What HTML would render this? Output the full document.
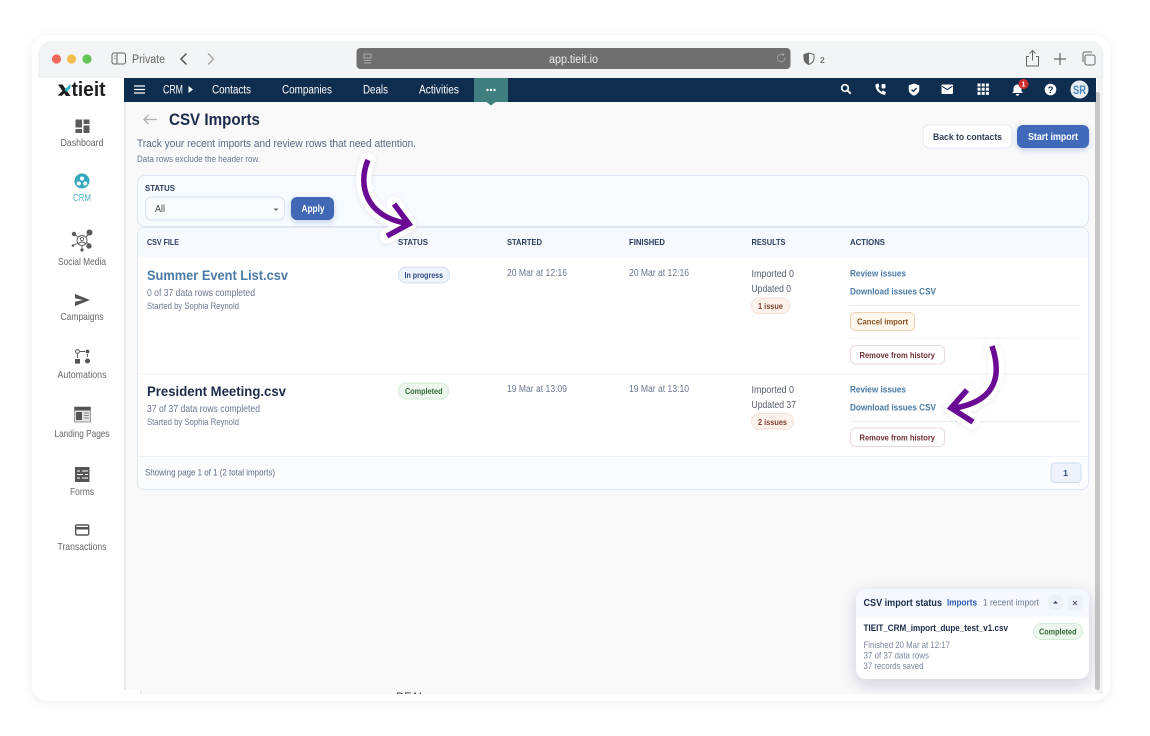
<!DOCTYPE html>
<html><head><meta charset="utf-8"><title>CSV Imports</title>
<style>
html,body{margin:0;padding:0;background:#fff;width:1150px;height:736px;overflow:hidden}
svg{display:block}
text{font-family:"Liberation Sans",sans-serif}
.b{font-weight:700}
</style></head><body>
<svg xmlns="http://www.w3.org/2000/svg" width="1150" height="736" viewBox="0 0 1150 736">
<defs>
<filter id="outer" x="-5%" y="-5%" width="110%" height="110%"><feDropShadow dx="0" dy="2" stdDeviation="5" flood-color="#000" flood-opacity=".07"/></filter>
<filter id="pop" x="-20%" y="-30%" width="140%" height="170%"><feDropShadow dx="0" dy="5" stdDeviation="8" flood-color="#1b2b4b" flood-opacity=".2"/></filter>
<filter id="btn" x="-30%" y="-30%" width="160%" height="190%"><feDropShadow dx="0" dy="2" stdDeviation="3" flood-color="#3f67b5" flood-opacity=".3"/></filter>
<filter id="halo" x="-30%" y="-30%" width="160%" height="160%"><feDropShadow dx="0" dy="1" stdDeviation="2.500" flood-color="#000" flood-opacity=".08"/></filter>
<clipPath id="win"><rect x="39" y="42" width="1064" height="652"/></clipPath>
</defs>

<!-- outer frame -->
<rect x="32" y="35" width="1078" height="666" rx="16" fill="#fff" filter="url(#outer)"/>
<path d="M39 78V54a12 12 0 0 1 12-12H1091a12 12 0 0 1 12 12V78Z" fill="#f3f4f6" stroke="#e9eaec" stroke-width=".7"/>

<!-- traffic lights -->
<circle cx="56.500" cy="59" r="4.600" fill="#ee6a5f"/><circle cx="71.500" cy="59" r="4.600" fill="#f5bd4f"/><circle cx="87" cy="59" r="4.600" fill="#61c454"/>
<rect x="112" y="53" width="13.500" height="11" rx="2" fill="none" stroke="#666" stroke-width="1"/><path d="M117 53v11" stroke="#666"/><path d="M114 56h1.500M114 58.500h1.500" stroke="#666" stroke-width=".8"/>
<text x="132" y="63" font-size="11.500" fill="#666" textLength="33" lengthAdjust="spacingAndGlyphs">Private</text>
<path d="M186.500 53.500l-5.500 5.500 5.500 5.500" fill="none" stroke="#555" stroke-width="1.500"/>
<path d="M208 53.500l5.500 5.500-5.500 5.500" fill="none" stroke="#aaa" stroke-width="1.500"/>
<rect x="356.500" y="48" width="434" height="21" rx="4" fill="#6f6f6f"/>
<path d="M364 54h7v4h-7zM364 60.500h7M364 63h7" fill="none" stroke="#a9a9a9" stroke-width="1"/>
<text x="549" y="63" font-size="11.500" fill="#ececec" textLength="49" lengthAdjust="spacingAndGlyphs">app.tieit.io</text>
<path d="M785 58a3.800 3.800 0 1 1-2-3.300M782.500 53l1.500 1.700-2 1" fill="none" stroke="#a5a5a5" stroke-width=".9"/>
<path d="M809 53l5 1.500v4c0 3-2.500 5-5 6-2.500-1-5-3-5-6v-4Z" fill="none" stroke="#666" stroke-width="1"/><path d="M809 53v11.500c-2.500-1-5-3-5-6v-4Z" fill="#666"/>
<text x="820" y="63" font-size="8.500" class="b" fill="#777">2</text>
<path d="M1029 57h-2.500v9.500h12V57H1036M1032.500 61V51.500M1029.500 54l3-3 3 3" fill="none" stroke="#666" stroke-width="1" transform="translate(0 -.5)"/>
<path d="M1060 53v12M1054 59h12" stroke="#666" stroke-width="1.200"/>
<rect x="1085" y="55" width="10" height="10" rx="2" fill="none" stroke="#666"/><path d="M1083 62v-8a2 2 0 0 1 2-2h7" fill="none" stroke="#666"/>

<g clip-path="url(#win)">
<!-- sidebar & content -->
<rect x="32" y="78" width="92" height="612" fill="#fff"/>
<rect x="124" y="102" width="973" height="592" fill="#f9f9f9"/>
<rect x="124" y="102" width="2" height="588" fill="#ececec"/>
<rect x="32" y="690" width="108" height="10" fill="#fff"/>
<rect x="140" y="690" width="1.500" height="4" fill="#e8e8e8"/>
<rect x="1097" y="78" width="6" height="616" fill="#f4f4f4"/>
<rect x="1095" y="92" width="5" height="598" rx="2.500" fill="#c6c6c6"/>
<text x="396" y="700" font-size="11" fill="#333" textLength="29" lengthAdjust="spacingAndGlyphs">DEAL</text>

<!-- navbar -->
<rect x="124" y="78" width="972" height="24" fill="#0f2d4e"/>
<path d="M134 86h11M134 89.500h11M134 93h11" stroke="#fff" stroke-width="1.300"/>
<text x="163" y="93.500" font-size="11.500" fill="#fff" textLength="20" lengthAdjust="spacingAndGlyphs">CRM</text>
<path d="M188.500 86l4.500 3.500-4.500 3.500Z" fill="#fff"/>
<text x="212" y="93.500" font-size="11.500" fill="#fff" textLength="39" lengthAdjust="spacingAndGlyphs">Contacts</text>
<text x="282" y="93.500" font-size="11.500" fill="#fff" textLength="50" lengthAdjust="spacingAndGlyphs">Companies</text>
<text x="363" y="93.500" font-size="11.500" fill="#fff" textLength="25" lengthAdjust="spacingAndGlyphs">Deals</text>
<text x="419" y="93.500" font-size="11.500" fill="#fff" textLength="40" lengthAdjust="spacingAndGlyphs">Activities</text>
<path d="M474 78h34v24h-12.500l-4.500 3.500-4.500-3.500H474Z" fill="#3f7f80"/>
<circle cx="487.500" cy="90" r="1.200" fill="#fff"/><circle cx="491" cy="90" r="1.200" fill="#fff"/><circle cx="494.500" cy="90" r="1.200" fill="#fff"/>

<!-- nav icons -->
<circle cx="845" cy="88" r="3.300" fill="none" stroke="#fff" stroke-width="1.700"/><path d="M847.400 90.400l3.300 3.300" stroke="#fff" stroke-width="2"/>
<path d="M875.500 84.500c-.5 5 3.500 9.500 9.500 10.500l1-3-3-1.500-1.500 1.200c-1.500-.9-2.700-2.200-3.300-3.800l1.200-1.500-1-3Z" fill="#fff"/><rect x="881.500" y="84" width="4" height="4.500" rx="1.200" fill="#fff"/>
<path d="M914 83.500l5.300 1.900v4c0 3.100-2.300 5.200-5.300 6.300-3-1.100-5.300-3.200-5.300-6.300v-4Z" fill="#fff"/><path d="M911.500 89.500l1.800 1.800 3.300-3.300" fill="none" stroke="#0f2d4e" stroke-width="1.300"/>
<rect x="941.500" y="84.500" width="11.500" height="9.500" rx="1" fill="#fff"/><path d="M942 86.300l5.200 3.300 5.200-3.300" fill="none" stroke="#0f2d4e" stroke-width="1"/>
<g fill="#fff"><rect x="977.500" y="83.500" width="3" height="3"/><rect x="981.700" y="83.500" width="3" height="3"/><rect x="985.900" y="83.500" width="3" height="3"/><rect x="977.500" y="87.700" width="3" height="3"/><rect x="981.700" y="87.700" width="3" height="3"/><rect x="985.900" y="87.700" width="3" height="3"/><rect x="977.500" y="91.900" width="3" height="3"/><rect x="981.700" y="91.900" width="3" height="3"/><rect x="985.900" y="91.900" width="3" height="3"/></g>
<path d="M1017.500 84.500a4 4 0 0 1 4 4v2.900l1.400 1.600h-10.800l1.400-1.600v-2.900a4 4 0 0 1 4-4ZM1015.800 94h3.400a1.700 1.700 0 0 1-3.400 0Z" fill="#fff"/>
<circle cx="1023.500" cy="84" r="5" fill="#cf2e2e"/><text x="1023.500" y="86.700" font-size="7" class="b" fill="#fff" text-anchor="middle">1</text>
<circle cx="1050.500" cy="89.500" r="5.800" fill="#fff"/><text x="1050.500" y="93" font-size="9.500" class="b" fill="#0f2d4e" text-anchor="middle">?</text>
<circle cx="1079.500" cy="89.500" r="9" fill="#e9edf2"/><text x="1079.500" y="93.800" font-size="12" class="b" fill="#4a89c8" text-anchor="middle" textLength="13" lengthAdjust="spacingAndGlyphs">SR</text>

<!-- logo -->
<path d="M58 84.500l4.500 0 8 11.500-4.500 0Z" fill="#1d1d22"/><path d="M70.500 84l-6 5.800 1.800 2.200 4.200-4Z" fill="#2fb4c6"/><path d="M57.500 95.500l5-4.500 2 2-2.500 2.800Z" fill="#1d1d22"/>
<text x="71.500" y="96" font-size="20" class="b" fill="#1d1d22" textLength="34" lengthAdjust="spacingAndGlyphs">tieit</text>

<!-- sidebar icons -->
<g fill="#5b5b5b">
<path d="M75.500 119.500h6.500v8h-6.500zM83.500 119.500h6v4.500h-6zM83.500 125.500h6v7.500h-6zM75.500 129h6.500v4h-6.500z"/>
</g>
<circle cx="82" cy="181" r="7.500" fill="#35a8bd"/><circle cx="82" cy="178.500" r="2" fill="#fff"/><circle cx="78.800" cy="183.500" r="2" fill="#fff"/><circle cx="85.200" cy="183.500" r="2" fill="#fff"/>
<g fill="none" stroke="#5b5b5b" stroke-width=".9"><circle cx="82" cy="240.500" r="5"/><circle cx="82" cy="239" r="1.700"/><path d="M78.500 244c1-2.500 6-2.500 7 0M78 237l-3-2.500M86 237l3-3M86.500 242.500l2.500 1.500M78 243l-4 2M82 245.500v4"/></g>
<g fill="#5b5b5b"><circle cx="74" cy="234" r="2.200"/><circle cx="89.500" cy="232.500" r="3"/><circle cx="89" cy="246" r="2.700"/><circle cx="73" cy="245.500" r="1.300"/><circle cx="82" cy="250" r="1.600"/></g>
<path d="M75 294l15 6-15 6 0-4.300 8-1.700-8-1.700Z" fill="#555"/>
<g fill="#555"><rect x="75" y="359" width="5" height="4.600"/><circle cx="87.500" cy="361" r="2.500"/><circle cx="87.500" cy="351.500" r="1.900"/></g>
<circle cx="77.500" cy="351.500" r="1.900" fill="none" stroke="#555" stroke-width="1"/><path d="M80 351.500h5M77.500 354v4M87.500 354v3" stroke="#555" stroke-width=".9"/>
<rect x="74.500" y="407" width="16" height="15" fill="#e2e2e2" stroke="#666" stroke-width=".6"/><rect x="74.500" y="407" width="16" height="3.500" fill="#555"/><rect x="76" y="412" width="6" height="8" fill="#555"/><path d="M84 413h5M84 415.500h5M84 418h5" stroke="#888" stroke-width=".9"/>
<rect x="75" y="467" width="14.500" height="15" fill="#555"/><path d="M77 471h3M82 471h6M77 474.500h6M85 474.500h3M77 478h3M82 478h6" stroke="#fff" stroke-width=".9"/>
<rect x="75.700" y="525" width="13" height="10" rx="1.200" fill="none" stroke="#555" stroke-width="1.400"/><rect x="75.700" y="527" width="13" height="2.500" fill="#555"/>

<!-- sidebar labels -->
<g font-size="10.300" fill="#666" text-anchor="middle">
<text x="82" y="146" textLength="43" lengthAdjust="spacingAndGlyphs">Dashboard</text>
<text x="82" y="201" fill="#4bb4c8" textLength="18" lengthAdjust="spacingAndGlyphs">CRM</text>
<text x="82" y="265" textLength="48" lengthAdjust="spacingAndGlyphs">Social Media</text>
<text x="82" y="320" textLength="43" lengthAdjust="spacingAndGlyphs">Campaigns</text>
<text x="82" y="378" textLength="49" lengthAdjust="spacingAndGlyphs">Automations</text>
<text x="82" y="437" textLength="55" lengthAdjust="spacingAndGlyphs">Landing Pages</text>
<text x="82" y="495" textLength="24" lengthAdjust="spacingAndGlyphs">Forms</text>
<text x="82" y="550" textLength="49" lengthAdjust="spacingAndGlyphs">Transactions</text>
</g>

<!-- heading -->
<path d="M157 119.500h-13M148.500 115l-4.500 4.500 4.500 4.500" fill="none" stroke="#b0b0b0" stroke-width="1.300"/>
<text x="169" y="125" font-size="17" class="b" fill="#1b2b4b" textLength="91" lengthAdjust="spacingAndGlyphs">CSV Imports</text>
<text x="137" y="147" font-size="11.200" fill="#5a6a85" textLength="279" lengthAdjust="spacingAndGlyphs">Track your recent imports and review rows that need attention.</text>
<text x="137" y="162" font-size="8.800" fill="#6d7a92" textLength="123" lengthAdjust="spacingAndGlyphs">Data rows exclude the header row.</text>
<rect x="923" y="125" width="89" height="23" rx="6" fill="#fff" stroke="#e2e8f2"/>
<text x="933" y="140" font-size="9.200" class="b" fill="#2e3d55" textLength="69" lengthAdjust="spacingAndGlyphs">Back to contacts</text>
<rect x="1017" y="125" width="72" height="23" rx="6" fill="#4069b9" filter="url(#btn)"/>
<text x="1028" y="140" font-size="9.700" class="b" fill="#fff" textLength="50" lengthAdjust="spacingAndGlyphs">Start import</text>

<!-- filter -->
<rect x="137.500" y="175.500" width="951" height="51" rx="7" fill="#f7faff" stroke="#dfe7f3"/>
<text x="145" y="191" font-size="8.500" class="b" fill="#2c3e5e" textLength="30" lengthAdjust="spacingAndGlyphs">STATUS</text>
<rect x="145.500" y="197" width="139" height="23" rx="6" fill="#f9fbff" stroke="#d8e2f2"/>
<text x="155" y="212" font-size="10.200" fill="#444" textLength="10" lengthAdjust="spacingAndGlyphs">All</text>
<path d="M273.500 208.500h5l-2.500 2.500Z" fill="#666"/>
<rect x="291" y="197" width="43" height="23" rx="6" fill="#3f67b5" filter="url(#btn)"/>
<text x="301.500" y="212" font-size="9.700" class="b" fill="#fff" textLength="23" lengthAdjust="spacingAndGlyphs">Apply</text>

<!-- table -->
<rect x="137.500" y="227.500" width="951" height="262" rx="7" fill="#fff" stroke="#dfe7f3"/>
<path d="M138 258V235a7 7 0 0 1 7-7H1081a7 7 0 0 1 7 7V258Z" fill="#f6f9fe"/>
<path d="M138 456.500H1088V482a7 7 0 0 1-7 7H145a7 7 0 0 1-7-7Z" fill="#fbfcfe"/>
<path d="M138 456.500H1088M138 374H1088" stroke="#eef1f6" stroke-width="1"/>
<g font-size="8.500" class="b" fill="#2c3e5e">
<text x="147" y="245" textLength="32" lengthAdjust="spacingAndGlyphs">CSV FILE</text>
<text x="398" y="245" textLength="30" lengthAdjust="spacingAndGlyphs">STATUS</text>
<text x="507" y="245" textLength="35" lengthAdjust="spacingAndGlyphs">STARTED</text>
<text x="629" y="245" textLength="36" lengthAdjust="spacingAndGlyphs">FINISHED</text>
<text x="751.500" y="245" textLength="34" lengthAdjust="spacingAndGlyphs">RESULTS</text>
<text x="850" y="245" textLength="35" lengthAdjust="spacingAndGlyphs">ACTIONS</text>
</g>

<!-- row 1 -->
<text x="147" y="280" font-size="14" class="b" fill="#4a7aa5" textLength="141" lengthAdjust="spacingAndGlyphs">Summer Event List.csv</text>
<text x="147" y="296" font-size="9.700" fill="#6b7890" textLength="108" lengthAdjust="spacingAndGlyphs">0 of 37 data rows completed</text>
<text x="147" y="309" font-size="9" fill="#6b7890" textLength="92" lengthAdjust="spacingAndGlyphs">Started by Sophia Reynold</text>
<rect x="398.500" y="267" width="51" height="16" rx="8" fill="#eef3fd" stroke="#d5def3"/>
<text x="404.500" y="278" font-size="8.700" class="b" fill="#2f4a80" textLength="38.500" lengthAdjust="spacingAndGlyphs">In progress</text>
<text x="507" y="276" font-size="9.700" fill="#6b7890" textLength="60" lengthAdjust="spacingAndGlyphs">20 Mar at 12:16</text>
<text x="629" y="276" font-size="9.700" fill="#6b7890" textLength="60" lengthAdjust="spacingAndGlyphs">20 Mar at 12:16</text>
<text x="751.500" y="277" font-size="9.700" fill="#555e6e" textLength="42.500" lengthAdjust="spacingAndGlyphs">Imported 0</text>
<text x="751.500" y="292" font-size="9.700" fill="#555e6e" textLength="39.500" lengthAdjust="spacingAndGlyphs">Updated 0</text>
<rect x="751.500" y="298" width="38" height="15.500" rx="7.700" fill="#fdf2ec" stroke="#f5dfd5"/>
<text x="758" y="309" font-size="8.700" class="b" fill="#7e3f2e" textLength="25" lengthAdjust="spacingAndGlyphs">1 issue</text>
<text x="850" y="276.500" font-size="9.200" class="b" fill="#4a7aa5" textLength="56" lengthAdjust="spacingAndGlyphs">Review issues</text>
<text x="850" y="294.500" font-size="9.200" class="b" fill="#4a7aa5" textLength="86" lengthAdjust="spacingAndGlyphs">Download issues CSV</text>
<path d="M850 305.500H1080" stroke="#e8edf5"/>
<rect x="850.500" y="312.500" width="64" height="18" rx="5" fill="#fff7ee" stroke="#f0d2ae"/>
<text x="857" y="324.500" font-size="8.700" class="b" fill="#8a4f22" textLength="51" lengthAdjust="spacingAndGlyphs">Cancel import</text>
<path d="M850 338.500H1080" stroke="#f2f5fa"/>
<rect x="850.500" y="345.500" width="94" height="18.500" rx="5" fill="#fff" stroke="#ecd8d8"/>
<text x="859.500" y="358" font-size="8.700" class="b" fill="#6e2e33" textLength="75.500" lengthAdjust="spacingAndGlyphs">Remove from history</text>

<!-- row 2 -->
<text x="147" y="396" font-size="14" class="b" fill="#1b2b4b" textLength="139" lengthAdjust="spacingAndGlyphs">President Meeting.csv</text>
<text x="147" y="412" font-size="9.700" fill="#6b7890" textLength="113" lengthAdjust="spacingAndGlyphs">37 of 37 data rows completed</text>
<text x="147" y="425" font-size="9" fill="#6b7890" textLength="92" lengthAdjust="spacingAndGlyphs">Started by Sophia Reynold</text>
<rect x="398.500" y="383" width="50" height="16" rx="8" fill="#eef7ee" stroke="#d5ead5"/>
<text x="405" y="394" font-size="8.700" class="b" fill="#2f6b3a" textLength="37.500" lengthAdjust="spacingAndGlyphs">Completed</text>
<text x="507" y="392" font-size="9.700" fill="#6b7890" textLength="60" lengthAdjust="spacingAndGlyphs">19 Mar at 13:09</text>
<text x="629" y="392" font-size="9.700" fill="#6b7890" textLength="60" lengthAdjust="spacingAndGlyphs">19 Mar at 13:10</text>
<text x="751.500" y="393" font-size="9.700" fill="#555e6e" textLength="42.500" lengthAdjust="spacingAndGlyphs">Imported 0</text>
<text x="751.500" y="408" font-size="9.700" fill="#555e6e" textLength="44.500" lengthAdjust="spacingAndGlyphs">Updated 37</text>
<rect x="751.500" y="413.500" width="42" height="15.500" rx="7.700" fill="#fdf2ec" stroke="#f5dfd5"/>
<text x="758" y="425" font-size="8.700" class="b" fill="#7e3f2e" textLength="29" lengthAdjust="spacingAndGlyphs">2 issues</text>
<text x="850" y="392.500" font-size="9.200" class="b" fill="#4a7aa5" textLength="56" lengthAdjust="spacingAndGlyphs">Review issues</text>
<text x="850" y="410.500" font-size="9.200" class="b" fill="#4a7aa5" textLength="86" lengthAdjust="spacingAndGlyphs">Download issues CSV</text>
<path d="M850 421.500H1080" stroke="#e8edf5"/>
<rect x="850.500" y="428" width="94" height="18.500" rx="5" fill="#fff" stroke="#ecd8d8"/>
<text x="859.500" y="440.500" font-size="8.700" class="b" fill="#6e2e33" textLength="75.500" lengthAdjust="spacingAndGlyphs">Remove from history</text>

<!-- footer -->
<text x="145" y="475.500" font-size="9.200" fill="#5f6d86" textLength="130" lengthAdjust="spacingAndGlyphs">Showing page 1 of 1 (2 total imports)</text>
<rect x="1051" y="463" width="30" height="19.500" rx="4" fill="#eef3fb" stroke="#cfdcf0"/>
<text x="1065.500" y="476" font-size="8.700" class="b" fill="#2f4a80" text-anchor="middle">1</text>

<!-- popup -->
<rect x="856" y="589" width="233" height="90" rx="10" fill="#fff" filter="url(#pop)"/>
<path d="M856 617V599a10 10 0 0 1 10-10H1079a10 10 0 0 1 10 10V617Z" fill="#f5f8fe"/>
<text x="863.500" y="606" font-size="10.200" class="b" fill="#1b2b4b" textLength="78.500" lengthAdjust="spacingAndGlyphs">CSV import status</text>
<text x="947" y="605.500" font-size="9.200" class="b" fill="#2a5bb0" textLength="30" lengthAdjust="spacingAndGlyphs">Imports</text>
<text x="983" y="605.500" font-size="9.200" fill="#6b7890" textLength="56" lengthAdjust="spacingAndGlyphs">1 recent import</text>
<rect x="1048" y="595" width="15" height="15" rx="4" fill="#edf1fa"/><path d="M1053 603.500h5l-2.500-2.500Z" fill="#2c3e5e"/>
<rect x="1067.500" y="595.500" width="15" height="15" rx="4" fill="#edf1fa"/><path d="M1073 601l4 4M1077 601l-4 4" stroke="#556" stroke-width=".9"/>
<text x="863.500" y="631" font-size="9.200" class="b" fill="#1b2b4b" textLength="144.500" lengthAdjust="spacingAndGlyphs">TIEIT_CRM_import_dupe_test_v1.csv</text>
<rect x="1033.500" y="623.500" width="49" height="16" rx="8" fill="#eef7ee" stroke="#d5ead5"/>
<text x="1039" y="634.500" font-size="8.700" class="b" fill="#2f6b3a" textLength="37.500" lengthAdjust="spacingAndGlyphs">Completed</text>
<text x="863.500" y="648" font-size="9.200" fill="#7a869c" textLength="86.500" lengthAdjust="spacingAndGlyphs">Finished 20 Mar at 12:17</text>
<text x="863.500" y="658.500" font-size="9.200" fill="#7a869c" textLength="65.500" lengthAdjust="spacingAndGlyphs">37 of 37 data rows</text>
<text x="863.500" y="669" font-size="9.200" fill="#7a869c" textLength="60" lengthAdjust="spacingAndGlyphs">37 records saved</text>
</g>

<!-- arrows -->
<g fill="none" stroke-linecap="butt" stroke-linejoin="miter">
<g filter="url(#halo)" stroke="#fff" stroke-linecap="round" stroke-linejoin="round" stroke-width="15">
<path d="M368 160C357 186 367 216 405 223"/><path d="M394 204L409 224L387 236"/>
<path d="M992 346C1004 382 990 402 955 408"/><path d="M967 390L951 408L973 422"/>
</g>
<g stroke="#6a0a94" stroke-width="5.500">
<path d="M368 160C357 186 367 216 405 223"/><path d="M394 204L409 224L387 236"/>
<path d="M992 346C1004 382 990 402 955 408"/><path d="M967 390L951 408L973 422"/>
</g>
</g>
</svg>
</body></html>
